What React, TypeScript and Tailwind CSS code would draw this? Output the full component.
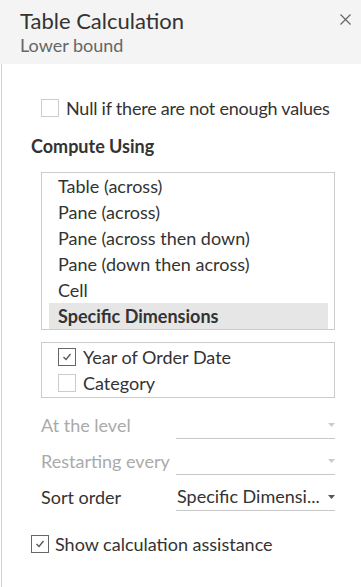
import React from "react";

const font = { fontFamily: "Lato, 'Liberation Sans', sans-serif" };

const CheckBox: React.FC<{ checked?: boolean }> = ({ checked }) => (
    <span
        className={`w-[18px] h-[18px] shrink-0 border bg-white flex items-start justify-center ${checked ? "border-[#666666]" : "border-[#cccccc]"}`}
    >
        {checked && (
            <svg width="10" height="10" viewBox="0 0 10 10" className="mt-[3px]">
                <path d="M1.5 5 L4 7.5 L8.5 2" fill="none" stroke="#555555" strokeWidth="1.3" />
            </svg>
        )}
    </span>
);

const Caret: React.FC<{ enabled?: boolean }> = ({ enabled }) => (
    <svg width="7" height="4" viewBox="0 0 7 4" className="shrink-0">
        <path d="M0 0 H7 L3.5 4 Z" fill={enabled ? "#555555" : "#cccccc"} />
    </svg>
);

const options = [
    "Table (across)",
    "Pane (across)",
    "Pane (across then down)",
    "Pane (down then across)",
    "Cell",
    "Specific Dimensions",
];

const DropRow: React.FC<{ label: string; value?: string; enabled?: boolean }> = ({ label, value, enabled }) => (
    <div className="flex items-stretch h-[28px]">
        <div className={`w-[135px] flex items-center text-[18px] whitespace-nowrap ${enabled ? "text-[#333333]" : "text-[#aaaaaa]"}`}>
            {label}
        </div>
        <div className="flex-1 flex items-center justify-between border-b border-[#c8c8c8] pl-[1px]">
            <span className="text-[18px] text-[#333333] whitespace-nowrap">{value}</span>
            <Caret enabled={enabled} />
        </div>
    </div>
);

export default function App() {
    return (
        <div className="w-[361px] h-[587px] bg-white overflow-hidden flex flex-col" style={font}>
            <header className="h-[64px] bg-[#f4f4f4] relative px-[20px] pt-[8px] shrink-0">
                <div className="text-[22px] leading-[26px] text-[#333333]">Table Calculation</div>
                <div className="text-[18px] leading-[22px] text-[#666666]">Lower bound</div>
                <button className="absolute right-[10px] top-[13px] w-[12px] h-[12px] flex items-center justify-center">
                    <svg width="11" height="11" viewBox="0 0 11 11">
                        <path d="M0.5 0.5 L10.5 10.5 M10.5 0.5 L0.5 10.5" stroke="#666666" strokeWidth="1.2" />
                    </svg>
                </button>
            </header>

            <main className="flex-1 ml-[1px] border-l border-[#d2d2d2] pl-[29px] pr-[26px]">
                <label className="flex items-center gap-[7px] mt-[35px] ml-[10px] h-[18px] text-[18px] text-[#333333] whitespace-nowrap">
                    <CheckBox />
                    <span className="tracking-[-0.22px]">Null if there are not enough values</span>
                </label>

                <div className="mt-[18px] text-[18px] leading-[22px] font-bold text-[#333333]">Compute Using</div>

                <div className="ml-[10px] mt-[15px] border border-[#cccccc] pl-[7px] pr-[6px]">
                    {options.map((o) => {
                        const sel = o === "Specific Dimensions";
                        return (
                            <div
                                key={o}
                                className={`h-[26px] flex items-center pl-[9px] text-[18px] text-[#333333] ${sel ? "bg-[#e6e6e6] font-bold" : ""}`}
                            >
                                {o}
                            </div>
                        );
                    })}
                </div>

                <div className="ml-[10px] mt-[12px] border border-[#cccccc] py-[1px] pl-[16px]">
                    <label className="h-[26px] flex items-center gap-[7px] text-[18px] text-[#333333]">
                        <CheckBox checked />
                        <span>Year of Order Date</span>
                    </label>
                    <label className="h-[26px] flex items-center gap-[7px] text-[18px] text-[#333333]">
                        <CheckBox />
                        <span>Category</span>
                    </label>
                </div>

                <div className="ml-[10px] mt-[13px] flex flex-col gap-[8px]">
                    <DropRow label="At the level" />
                    <DropRow label="Restarting every" />
                    <DropRow label="Sort order" value="Specific Dimensi..." enabled />
                </div>

                <label className="flex items-center gap-[6px] mt-[24px] h-[18px] text-[18px] text-[#333333] whitespace-nowrap">
                    <CheckBox checked />
                    <span>Show calculation assistance</span>
                </label>
            </main>
        </div>
    );
}
